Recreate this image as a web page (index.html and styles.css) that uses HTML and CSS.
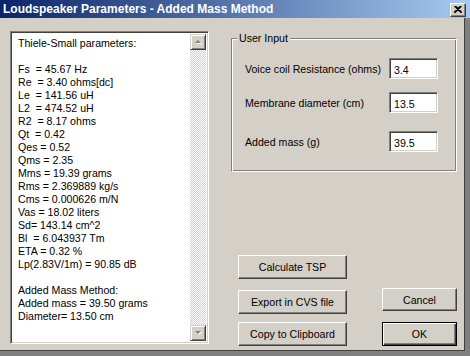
FILE: index.html
```html
<!DOCTYPE html>
<html lang="en">
<head>
    <meta charset="UTF-8">
    <title>Loudspeaker Parameters - Added Mass Method</title>
    <link rel="stylesheet" href="styles.css">
</head>
<body>

    <div class="window">
        <div class="titlebar">
            <span class="title">Loudspeaker Parameters - Added Mass Method</span>
            <div class="close-btn">
                <svg width="8" height="7" viewBox="0 0 8 7">
                    <path d="M0.5 0 L7.5 7 M1.5 0 L8 6.5 M7.5 0 L0.5 7 M6.5 0 L0 6.5" stroke="#000" stroke-width="1.2" fill="none"/>
                </svg>
            </div>
        </div>

        <div class="client">
            <!-- Results box -->
            <div class="listbox">
                <div class="results">Thiele-Small parameters:

Fs  = 45.67 Hz
Re  = 3.40 ohms[dc]
Le  = 141.56 uH
L2  = 474.52 uH
R2  = 8.17 ohms
Qt  = 0.42
Qes = 0.52
Qms = 2.35
Mms = 19.39 grams
Rms = 2.369889 kg/s
Cms = 0.000626 m/N
Vas = 18.02 liters
Sd= 143.14 cm^2
Bl  = 6.043937 Tm
ETA = 0.32 %
Lp(2.83V/1m) = 90.85 dB

Added Mass Method:
Added mass = 39.50 grams
Diameter= 13.50 cm</div>
                <div class="scrollbar">
                    <div class="sb-btn">
                        <svg width="7" height="5" viewBox="0 0 7 5">
                            <polygon points="4,1 7,4 1,4" fill="#fff"/>
                            <polygon points="3,0 6,3 0,3" fill="#808080"/>
                        </svg>
                    </div>
                    <div class="sb-track"></div>
                    <div class="sb-btn">
                        <svg width="7" height="5" viewBox="0 0 7 5">
                            <polygon points="1,1 7,1 4,4" fill="#fff"/>
                            <polygon points="0,0 6,0 3,3" fill="#808080"/>
                        </svg>
                    </div>
                </div>
            </div>

            <div class="side">
                <!-- User Input group -->
                <div class="group">
                    <span class="legend">User Input</span>
                    <div class="field first">
                        <label for="re">Voice coil Resistance (ohms)</label>
                        <input type="text" id="re" value="3.4">
                    </div>
                    <div class="field second">
                        <label for="diam">Membrane diameter (cm)</label>
                        <input type="text" id="diam" value="13.5">
                    </div>
                    <div class="field third">
                        <label for="mass">Added mass (g)</label>
                        <input type="text" id="mass" value="39.5">
                    </div>
                </div>

                <div class="actions">
                    <div class="actions-left">
                        <div class="btn wide">Calculate TSP</div>
                        <div class="btn wide export">Export in CVS file</div>
                        <div class="btn wide copy">Copy to Clipboard</div>
                    </div>
                    <div class="actions-right">
                        <div class="btn small">Cancel</div>
                        <div class="btn small default">OK</div>
                    </div>
                </div>
            </div>
        </div>
    </div>

</body>
</html>
```

FILE: styles.css
```css
* {
    box-sizing: border-box;
}

body {
    margin: 0;
    padding: 0;
    background: #404040;
    font-family: 'Liberation Sans', Arial, sans-serif;
    font-size: 10.6px;
    color: #000;
}

.window {
    width: 470px;
    height: 356px;
    background: #d4d0c8;
    border-right: 5px solid #808080;
    border-bottom: 5px solid #808080;
    box-shadow: inset -1px -1px 0 #404040;
    display: flex;
    flex-direction: column;
}

.titlebar {
    height: 18px;
    margin-right: -5px;
    background: linear-gradient(to right, #0a246a, #a6caf0);
    display: flex;
    align-items: center;
    padding: 0 4px 0 3px;
}

.title {
    flex: 1;
    color: #fff;
    font-weight: bold;
    font-size: 12px;
    white-space: nowrap;
}

.close-btn {
    width: 16px;
    height: 14px;
    background: #d4d0c8;
    border: 1px solid;
    border-color: #fff #404040 #404040 #fff;
    box-shadow: inset -1px -1px 0 #808080;
    display: flex;
    align-items: center;
    justify-content: center;
    margin-top: 1px;
}

.client {
    flex: 1;
    display: flex;
    padding: 13px 0 0 10px;
}

/* Results list box */
.listbox {
    width: 199px;
    height: 313px;
    background: #fff;
    border: 1px solid;
    border-color: #808080 #fff #fff #808080;
    box-shadow: inset 1px 1px 0 #404040, inset -1px -1px 0 #d4d0c8;
    padding: 2px;
    display: flex;
}

.results {
    flex: 1;
    white-space: pre;
    line-height: 13px;
    padding: 3px 0 0 5px;
    overflow: hidden;
}

.scrollbar {
    width: 16px;
    display: flex;
    flex-direction: column;
}

.sb-btn {
    height: 16px;
    background: #d4d0c8;
    border: 1px solid;
    border-color: #d4d0c8 #404040 #404040 #d4d0c8;
    box-shadow: inset 1px 1px 0 #fff, inset -1px -1px 0 #808080;
    display: flex;
    align-items: center;
    justify-content: center;
}

.sb-track {
    flex: 1;
    background-color: #fff;
    background-image: repeating-conic-gradient(#d4d0c8 0 25%, #fff 0 50%);
    background-size: 2px 2px;
}

/* Right side */
.side {
    width: 226px;
    margin-left: 22px;
    display: flex;
    flex-direction: column;
}

.group {
    position: relative;
    margin-top: 7px;
    height: 134px;
    border: 1px solid;
    border-color: #808080 #fff #fff #808080;
    box-shadow: inset 1px 1px 0 #fff, inset -1px -1px 0 #808080;
    padding: 0 18px 0 13px;
}

.legend {
    position: absolute;
    left: 5px;
    top: -7px;
    padding: 0 2px;
    line-height: 13px;
    background: #d4d0c8;
}

.field {
    display: flex;
    align-items: center;
    height: 21px;
}

.field label {
    flex: 1;
}

.field.first {
    margin-top: 19px;
}

.field.second {
    margin-top: 13px;
}

.field.third {
    margin-top: 18px;
}

.field input {
    width: 49px;
    height: 21px;
    font-family: inherit;
    font-size: 10.6px;
    padding: 2px 0 0 4px;
    background: #fff;
    border: 1px solid;
    border-color: #808080 #fff #fff #808080;
    box-shadow: inset 1px 1px 0 #404040, inset -1px -1px 0 #d4d0c8;
    outline: none;
}

.actions {
    margin-top: 83px;
    display: flex;
    justify-content: space-between;
    align-items: flex-end;
}

.actions-left {
    margin-left: 7px;
    display: flex;
    flex-direction: column;
}

.actions-right {
    display: flex;
    flex-direction: column;
}

.btn {
    background: #d4d0c8;
    border: 1px solid;
    border-color: #fff #404040 #404040 #fff;
    box-shadow: inset -1px -1px 0 #808080;
    display: flex;
    align-items: center;
    justify-content: center;
    white-space: nowrap;
}

.btn.wide {
    width: 109px;
    height: 24px;
}

.btn.export {
    margin-top: 11px;
}

.btn.copy {
    margin-top: 8px;
}

.btn.small {
    width: 75px;
    height: 23px;
}

.btn.default {
    height: 24px;
    margin-top: 11px;
    border: 1px solid #000;
    box-shadow: inset 1px 1px 0 #fff, inset -1px -1px 0 #404040, inset -2px -2px 0 #808080;
}
```
